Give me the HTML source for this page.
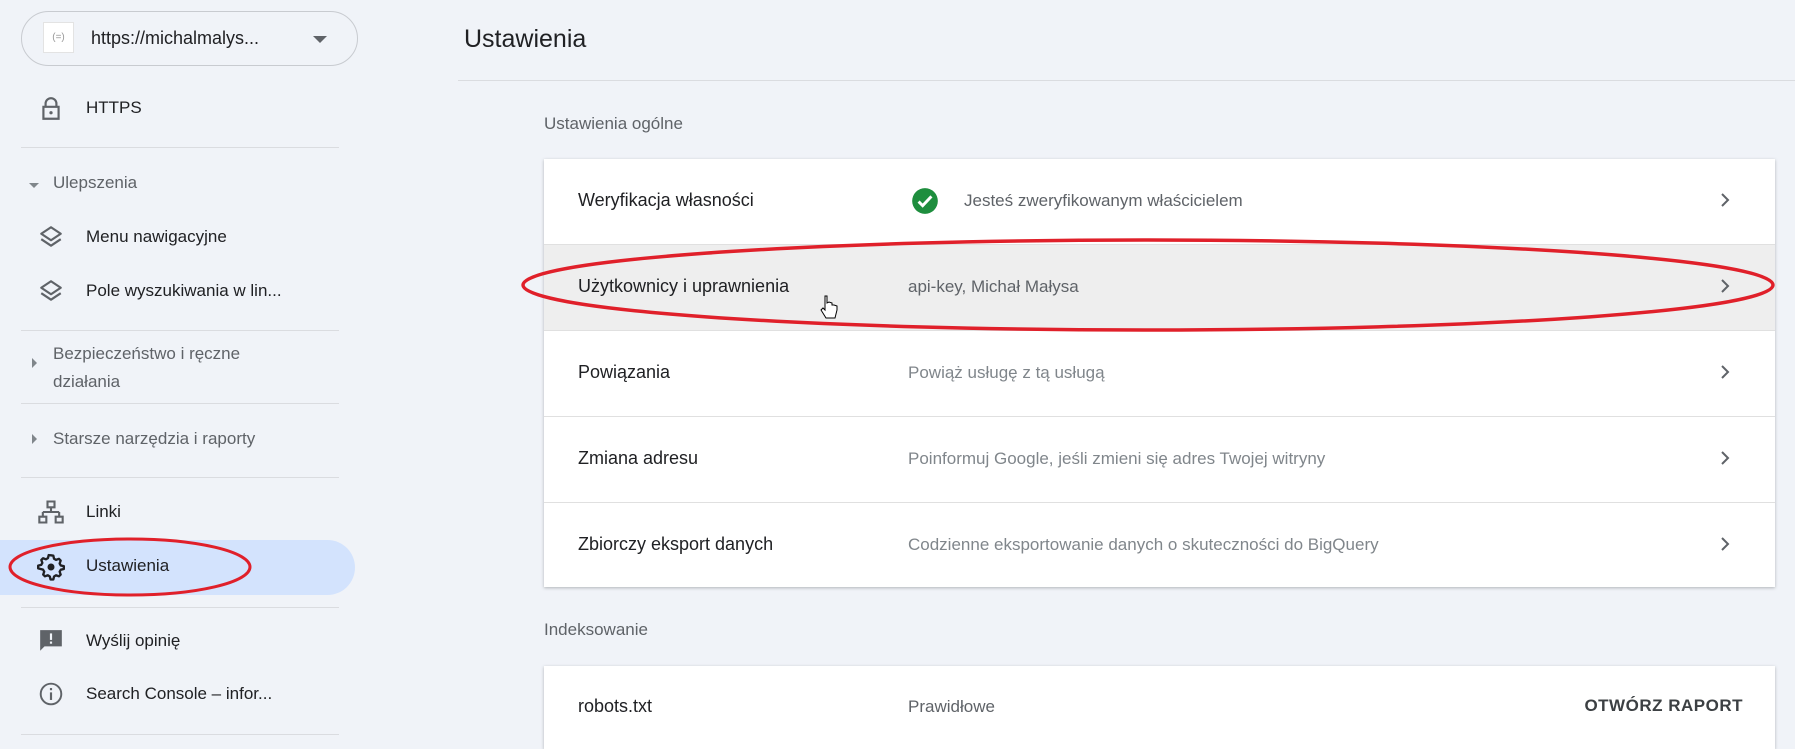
<!DOCTYPE html>
<html><head><meta charset="utf-8"><style>
*{margin:0;padding:0;box-sizing:border-box}
html,body{width:1795px;height:749px;overflow:hidden}
body{background:#f0f3f8;font-family:"Liberation Sans",sans-serif;position:relative;color:#202124}
.a{position:absolute}
.sb{position:absolute;font-size:17px;color:#202124;white-space:nowrap}
.grey{color:#5f6368}
.div{position:absolute;left:21px;width:318px;height:1px;background:#dadce0}
.card{position:absolute;left:544px;width:1231px;background:#fff;box-shadow:0 1px 3px rgba(60,64,67,.35)}
.row{position:absolute;left:0;width:100%;height:86px;border-bottom:1px solid #e0e0e0}
.row .l{position:absolute;left:34px;top:31px;font-size:18px;color:#202124;white-space:nowrap}
.row .v{position:absolute;left:364px;top:32px;font-size:17px;color:#80868b;white-space:nowrap}
.row svg.c{position:absolute;right:40px;top:31px}
</style></head><body>
<div class="a" style="left:21px;top:11px;width:337px;height:55px;border:1px solid #c8cbd0;border-radius:28px"></div>
<div class="a" style="left:43px;top:22px;width:31px;height:31px;background:#fff;border:1px solid #e3e3e3;font-size:10px;color:#999;text-align:center;line-height:29px">(=)</div>
<div class="sb" style="left:91px;top:28px;font-size:18px">https://michalmalys...</div>
<div class="a" style="left:313px;top:36px;width:0;height:0;border-left:7px solid transparent;border-right:7px solid transparent;border-top:7px solid #5f6368"></div>

<svg class="a" style="left:38px;top:96px" width="26" height="26" viewBox="0 0 24 24"><path d="M7 10V7a5 5 0 0110 0v3M5 10h14v11H5z" fill="none" stroke="#5f6368" stroke-width="2"/><circle cx="12" cy="15.5" r="1.5" fill="#5f6368"/></svg>
<div class="sb" style="left:86px;top:98px">HTTPS</div>
<div class="div" style="top:147px"></div>

<div class="a" style="left:29px;top:183px;border-left:5px solid transparent;border-right:5px solid transparent;border-top:5px solid #80868b"></div>
<div class="sb grey" style="left:53px;top:173px">Ulepszenia</div>
<svg class="a" style="left:38px;top:224px" width="26" height="26" viewBox="0 0 24 24"><path d="M12 3l9 6-9 6-9-6z M3 14l9 6 9-6" fill="none" stroke="#5f6368" stroke-width="2" stroke-linejoin="round"/></svg>
<div class="sb" style="left:86px;top:227px">Menu nawigacyjne</div>
<svg class="a" style="left:38px;top:278px" width="26" height="26" viewBox="0 0 24 24"><path d="M12 3l9 6-9 6-9-6z M3 14l9 6 9-6" fill="none" stroke="#5f6368" stroke-width="2" stroke-linejoin="round"/></svg>
<div class="sb" style="left:86px;top:281px">Pole wyszukiwania w lin...</div>
<div class="div" style="top:330px"></div>

<div class="a" style="left:32px;top:358px;border-top:5px solid transparent;border-bottom:5px solid transparent;border-left:5px solid #80868b"></div>
<div class="sb grey" style="left:53px;top:340px;line-height:28px">Bezpieczeństwo i ręczne<br>działania</div>
<div class="div" style="top:403px"></div>
<div class="a" style="left:32px;top:434px;border-top:5px solid transparent;border-bottom:5px solid transparent;border-left:5px solid #80868b"></div>
<div class="sb grey" style="left:53px;top:429px">Starsze narzędzia i raporty</div>
<div class="div" style="top:477px"></div>

<svg class="a" style="left:37px;top:498px" width="28" height="28" viewBox="0 0 24 24"><path d="M9 3h6v5H9zM12 8v4M5 12h14M5 12v4M19 12v4M2 16h6v5H2zM16 16h6v5h-6z" fill="none" stroke="#5f6368" stroke-width="1.8"/></svg>
<div class="sb" style="left:86px;top:502px">Linki</div>

<div class="a" style="left:0;top:540px;width:355px;height:55px;background:#d3e3fd;border-radius:0 28px 28px 0"></div>
<svg class="a" style="left:37px;top:553px" width="28" height="28" viewBox="0 0 24 24"><path d="M12 2l2 .3.6 2.6 1.7 1 2.5-.9 1.5 1.5-.9 2.5 1 1.7 2.6.6v2.4l-2.6.6-1 1.7.9 2.5-1.5 1.5-2.5-.9-1.7 1-.6 2.6h-2.4l-.6-2.6-1.7-1-2.5.9-1.5-1.5.9-2.5-1-1.7L1 13.2v-2.4l2.6-.6 1-1.7-.9-2.5 1.5-1.5 2.5.9 1.7-1 .6-2.6z" fill="none" stroke="#202124" stroke-width="2" stroke-linejoin="round"/><circle cx="12" cy="12" r="3" fill="#202124"/></svg>
<div class="sb" style="left:86px;top:556px">Ustawienia</div>
<svg class="a" style="left:0;top:530px" width="270" height="75"><ellipse cx="130" cy="37" rx="120" ry="28" fill="none" stroke="#e0202a" stroke-width="3"/></svg>
<div class="div" style="top:607px"></div>

<svg class="a" style="left:38px;top:628px" width="26" height="26" viewBox="0 0 24 24"><path d="M2 2h20v15H6l-4 4z" fill="#5f6368"/><rect x="11" y="5" width="2" height="6" fill="#f0f3f8"/><rect x="11" y="12.5" width="2" height="2" fill="#f0f3f8"/></svg>
<div class="sb" style="left:86px;top:631px">Wyślij opinię</div>
<svg class="a" style="left:38px;top:681px" width="26" height="26" viewBox="0 0 24 24"><circle cx="12" cy="12" r="9.5" fill="none" stroke="#5f6368" stroke-width="1.8"/><rect x="11" y="10.5" width="2" height="7" fill="#5f6368"/><rect x="11" y="6.5" width="2" height="2" fill="#5f6368"/></svg>
<div class="sb" style="left:86px;top:684px">Search Console – infor...</div>
<div class="div" style="top:734px"></div>

<div class="a" style="left:464px;top:25px;font-size:25px;color:#202124">Ustawienia</div>
<div class="a" style="left:458px;top:80px;width:1337px;height:1px;background:#dadce0"></div>
<div class="a" style="left:544px;top:114px;font-size:17px;color:#5f6368">Ustawienia ogólne</div>

<div class="card" style="top:159px;height:428px">
 <div class="row" style="top:0"><div class="l">Weryfikacja własności</div>
  <svg class="a" style="left:367px;top:28px" width="28" height="28" viewBox="0 0 24 24"><circle cx="12" cy="12" r="11" fill="#1e8e3e"/><path d="M6.5 12.5l3.5 3.5 7.5-8" fill="none" stroke="#fff" stroke-width="2.5"/></svg>
  <div class="v" style="left:420px;color:#5f6368">Jesteś zweryfikowanym właścicielem</div>
  <svg class="c" width="20" height="20" viewBox="0 0 20 20"><path d="M7 4l6 6-6 6" fill="none" stroke="#5f6368" stroke-width="2"/></svg></div>
 <div class="row" style="top:86px;background:#eeeeee"><div class="l">Użytkownicy i uprawnienia</div><div class="v" style="color:#5f6368">api-key, Michał Małysa</div>
  <svg class="c" width="20" height="20" viewBox="0 0 20 20"><path d="M7 4l6 6-6 6" fill="none" stroke="#5f6368" stroke-width="2"/></svg></div>
 <div class="row" style="top:172px"><div class="l">Powiązania</div><div class="v">Powiąż usługę z tą usługą</div>
  <svg class="c" width="20" height="20" viewBox="0 0 20 20"><path d="M7 4l6 6-6 6" fill="none" stroke="#5f6368" stroke-width="2"/></svg></div>
 <div class="row" style="top:258px"><div class="l">Zmiana adresu</div><div class="v">Poinformuj Google, jeśli zmieni się adres Twojej witryny</div>
  <svg class="c" width="20" height="20" viewBox="0 0 20 20"><path d="M7 4l6 6-6 6" fill="none" stroke="#5f6368" stroke-width="2"/></svg></div>
 <div class="row" style="top:344px;border-bottom:none"><div class="l">Zbiorczy eksport danych</div><div class="v">Codzienne eksportowanie danych o skuteczności do BigQuery</div>
  <svg class="c" width="20" height="20" viewBox="0 0 20 20"><path d="M7 4l6 6-6 6" fill="none" stroke="#5f6368" stroke-width="2"/></svg></div>
</div>

<svg class="a" style="left:515px;top:232px" width="1270" height="106"><ellipse cx="633" cy="53" rx="625" ry="45" fill="none" stroke="#e0202a" stroke-width="3.5"/></svg>
<svg class="a" style="left:820px;top:294px" width="20" height="28" viewBox="0 0 20 28"><path d="M5 2v14l-2-2-2 2 5 8h9l2-8V12l-3-1-2 0V9l-3-1-2 1V2z" fill="#fff" stroke="#000" stroke-width="1"/></svg>

<div class="a" style="left:544px;top:620px;font-size:17px;color:#5f6368">Indeksowanie</div>
<div class="card" style="top:666px;height:83px">
 <div style="position:absolute;left:34px;top:30px;font-size:18px">robots.txt</div>
 <div style="position:absolute;left:364px;top:31px;font-size:17px;color:#5f6368">Prawidłowe</div>
 <div style="position:absolute;right:32px;top:30px;font-size:17px;font-weight:bold;color:#3c4043;letter-spacing:.5px">OTWÓRZ RAPORT</div>
</div>
</body></html>
